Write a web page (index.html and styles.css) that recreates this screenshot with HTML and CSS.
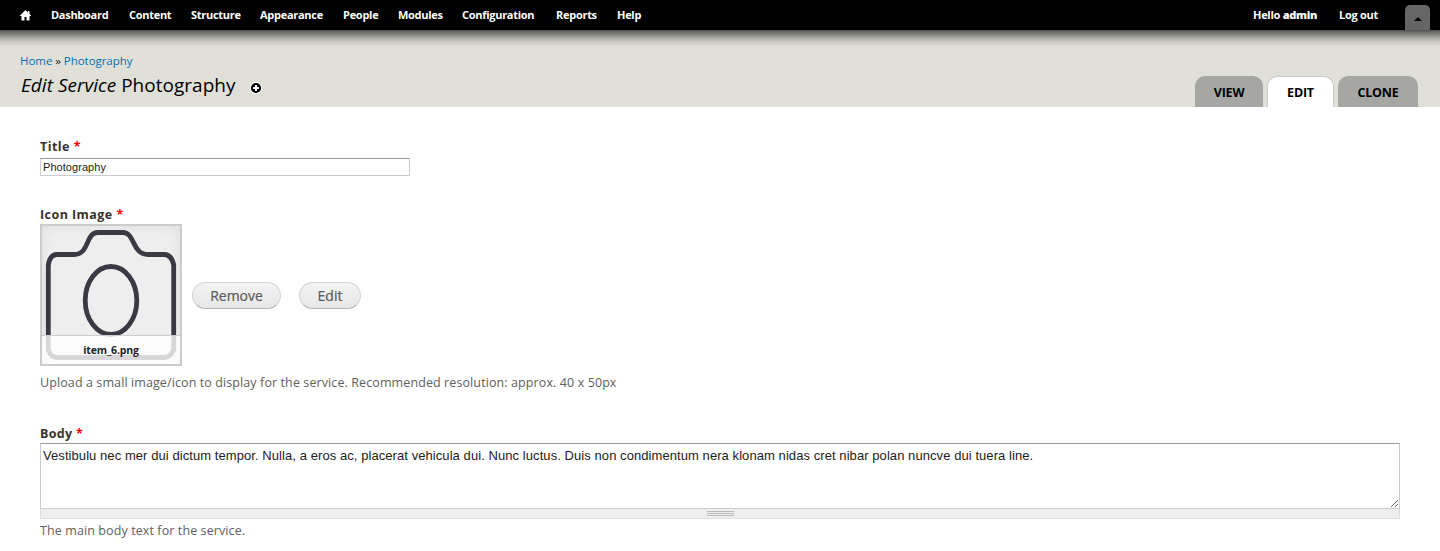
FILE: index.html
```html
<!DOCTYPE html>
<html lang="en">
<head>
<meta charset="utf-8">
<title>Edit Service Photography</title>
<link rel="stylesheet" href="styles.css">
</head>
<body>
<nav class="toolbar">
  <a class="home" href="#" aria-label="Home"><svg width="12" height="11" viewBox="0 0 12 11"><path fill="#fff" d="M5.500 0L0 5.500V6h1.500v4.500h3V7h2v3.500h3V6H11V5.500L9.500 4V1H8v1.500z"/></svg></a>
  <a class="w58" href="#">Dashboard</a>
  <a class="w42" href="#">Content</a>
  <a class="w49" href="#">Structure</a>
  <a class="w63" href="#">Appearance</a>
  <a class="w35" href="#">People</a>
  <a class="w45" href="#">Modules</a>
  <a class="w74" href="#">Configuration</a>
  <a class="w41" href="#">Reports</a>
  <a class="w25" href="#">Help</a>
  <div class="user">
    <a class="w66" href="#">Hello <b>admin</b></a>
    <a class="w41" href="#">Log out</a>
    <span class="toggle"><svg width="8" height="4" viewBox="0 0 8 4"><path d="M4 0l4 4H0z"/></svg></span>
  </div>
</nav>
<header class="branding">
  <div class="heading">
    <div class="crumbs"><a href="#">Home</a> » <a href="#">Photography</a></div>
    <h1><span class="title"><em>Edit Service</em> Photography</span>
      <svg class="plus" width="12" height="12" viewBox="0 0 12 12"><circle cx="6" cy="6" r="6" fill="#fff"/><circle cx="6" cy="6" r="5.1"/><path d="M6 3v6M3 6h6" stroke="#fff" stroke-width="2"/></svg>
    </h1>
  </div>
  <div class="tabs">
    <a class="tab view" href="#">VIEW</a>
    <a class="tab active" href="#">EDIT</a>
    <a class="tab clone" href="#">CLONE</a>
  </div>
</header>
<main class="form">
  <label class="label" for="title">Title <i>*</i></label>
  <input class="text" id="title" type="text" value="Photography">
  <div class="label image-label">Icon Image <i>*</i></div>
  <div class="media">
    <div class="thumb">
      <svg width="138" height="138" viewBox="0 0 138 138" fill="none" stroke="#3a3944" stroke-width="4.8">
        <path d="M6.300 124V39Q8 28.500 15 28.500H32C48 28.500 43 6.500 56 6.500H81C93 6.500 90 28.500 106 28.500H122Q129.500 28.500 131.700 39V124Q128 131.500 122 131.500H15Q9 131.500 6.300 124Z"/>
        <ellipse cx="69" cy="74.500" rx="25.800" ry="34"/>
      </svg>
      <div class="filename">item_6.png</div>
    </div>
    <button class="button remove">Remove</button>
    <button class="button edit">Edit</button>
  </div>
  <div class="desc upload">Upload a small image/icon to display for the service. Recommended resolution: approx. 40 x 50px</div>
  <label class="label body-label" for="body">Body <i>*</i></label>
  <textarea class="body" id="body">Vestibulu nec mer dui dictum tempor. Nulla, a eros ac, placerat vehicula dui. Nunc luctus. Duis non condimentum nera klonam nidas cret nibar polan nuncve dui tuera line.</textarea>
  <div class="grippie"><span></span></div>
  <div class="desc main">The main body text for the service.</div>
</main>
</body>
</html>
```

FILE: styles.css
```css
* { box-sizing: border-box; }
body { margin: 0; background: #fff; color: #333; font-family: "Open Sans", "Noto Sans", sans-serif; height: 551px; overflow: hidden; }
a { text-decoration: none; }

.toolbar { display: flex; gap: 20px; height: 30px; padding-left: 20px; background: #000; font-size: 11px; font-weight: 700; line-height: 30px; white-space: nowrap; }
.toolbar a { color: #fff; letter-spacing: -.28px; }
.toolbar .home { width: 11px; display: flex; align-items: center; }
.home svg { display: block; flex: none; }
.w25 { width: 25px; } .w35 { width: 35px; } .w41 { width: 41px; } .w42 { width: 42px; } .w45 { width: 44px; }
.w49 { width: 49px; } .w58 { width: 58px; } .w63 { width: 63px; } .w66 { width: 66px; } .w74 { width: 74px; }
.user { display: flex; gap: 20px; margin: 0 10px 0 auto; }
.toggle { width: 25px; height: 25px; margin: 5px 0 0 5px; background: #666; border-radius: 5px 5px 0 0; display: flex; justify-content: center; padding-top: 12px; }

.branding { display: flex; justify-content: space-between; height: 77px; padding: 0 22px 0 20px; background: linear-gradient(rgba(0, 0, 0, .64), rgba(0, 0, 0, .44) 4px, rgba(0, 0, 0, .24) 8px, rgba(0, 0, 0, .09) 12px, rgba(0, 0, 0, .02) 16px, transparent 20px) #e0e0d8; }
.crumbs { margin-top: 22px; height: 18px; font-size: 11.5px; line-height: 18px; letter-spacing: -.05px; color: #222; }
.crumbs a { color: #0071b8; }
h1 { margin: 3px 0 0; height: 24px; font-size: 19px; font-weight: 400; line-height: 24px; color: #000; display: flex; white-space: nowrap; }
.title { width: 230px; padding-left: 1px; letter-spacing: .02px; }
.plus { margin-top: 9px; }
.tabs { display: flex; align-items: flex-end; gap: 4px; }
.tab { height: 31px; border-radius: 10px 10px 0 0; background: #a6a7a2; color: #000; font-size: 12.5px; font-weight: 700; letter-spacing: -.2px; line-height: 33px; text-align: center; }
.view { width: 68px; }
.active { width: 67px; background: #fff; border: 1px solid #c9cac3; border-bottom: 0; line-height: 31px; }
.clone { width: 80px; }

.form { display: flex; flex-direction: column; padding: 30px 40px 0; }
.label { height: 20px; font-size: 12.5px; font-weight: 700; line-height: 20px; letter-spacing: .45px; }
.label i { color: #f00; font-style: normal; }
.text { width: 370px; height: 18px; margin-top: 1px; padding: 1px 2px; border: 1px solid #ccc; border-top-color: #999; font: 11px/14px "Liberation Sans", sans-serif; letter-spacing: .06px; color: #222; }
.image-label { margin-top: 29px; height: 19px; }
.media { display: flex; align-items: center; height: 142px; }
.thumb { position: relative; width: 142px; height: 142px; border: 2px solid #ccc; background: #eee; box-shadow: inset 0 0 12px rgba(0, 0, 0, .08); }
.thumb svg { display: block; filter: blur(.5px); }
.filename { position: absolute; left: 0; right: 0; bottom: 0; height: 29px; border-top: 1px solid #ccc; background: rgba(255, 255, 255, .8); font-size: 10.5px; font-weight: 700; letter-spacing: -.15px; line-height: 29px; text-align: center; color: #222; }
.button { height: 27px; padding: 0; border: 1px solid #d2d2d2; border-bottom-color: #b4b4b4; border-radius: 14px; background: linear-gradient(#f3f3f3, #e7e7e7); color: #5a5a5a; font: 14px/25px "Open Sans", "Noto Sans", sans-serif; -webkit-text-stroke: .2px #5a5a5a; }
.remove { width: 89px; margin-left: 10px; }
.edit { width: 62px; margin-left: 18px; }
.desc { height: 18px; font-size: 12.5px; line-height: 18px; letter-spacing: .1px; color: #606060; white-space: nowrap; }
.upload { margin-top: 8px; }
.body-label { margin-top: 32px; height: 19px; letter-spacing: .3px; }
.body { height: 66px; border: 1px solid #ccc; border-top-color: #999; padding: 4px 2px; margin: 0; resize: vertical; font: 13px/16px "Liberation Sans", sans-serif; letter-spacing: .07px; color: #222; }
.grippie { height: 10px; border: 1px solid #ddd; border-top: 0; background: #eee; display: flex; justify-content: center; padding-top: 2px; }
.grippie span { width: 27px; height: 5px; background: repeating-linear-gradient(#bbb 0 1px, #eee 1px 2px); }
.main { margin-top: 3px; }
```
